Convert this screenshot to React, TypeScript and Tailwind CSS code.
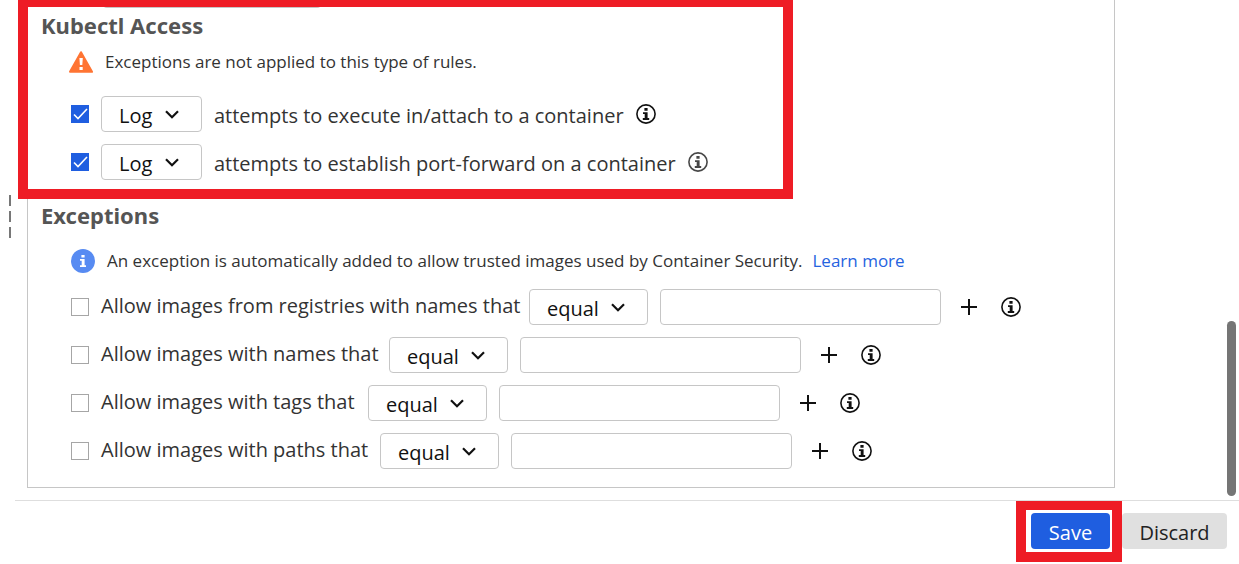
import { useState } from "react"

const kubectlRules = [
  { id: "exec", label: "attempts to execute in/attach to a container", iconColor: "text-[#111]" },
  { id: "port-forward", label: "attempts to establish port-forward on a container", iconColor: "text-[#484848]" },
]

const exceptionRules = [
  { id: "registries", label: "Allow images from registries with names that", labelWidth: "w-[416px]" },
  { id: "names", label: "Allow images with names that", labelWidth: "w-[276px]" },
  { id: "tags", label: "Allow images with tags that", labelWidth: "w-[255px]" },
  { id: "paths", label: "Allow images with paths that", labelWidth: "w-[267px]" },
]

function InfoIcon({ className = "" }: { className?: string }) {
  return (
    <svg viewBox="0 0 20 20" className={`size-5 ${className}`} aria-hidden="true">
      <circle cx="10" cy="10" r="9.1" fill="none" stroke="currentColor" strokeWidth="1.6" />
      <path d="M8.4 4h3.2v2.8H8.4zM7 8.2h4.6v5.9h1.6V16H6.8v-1.9h1.9V10H7z" fill="currentColor" />
    </svg>
  )
}

function PlusIcon() {
  return (
    <svg viewBox="0 0 16 16" className="size-4" aria-hidden="true">
      <path d="M8 0v16M0 8h16" stroke="#111" strokeWidth="2" />
    </svg>
  )
}

function WarningIcon() {
  return (
    <svg viewBox="0 0 24 22" className="h-[22px] w-6" aria-hidden="true">
      <path d="M12 1.2 23 20.8H1z" fill="#ff7433" stroke="#ff7433" strokeWidth="2" strokeLinejoin="round" />
      <path d="M10.4 7h3.4l-.5 7h-2.4zM10.5 16h3.2v3h-3.2z" fill="#fff" />
    </svg>
  )
}

function NoticeIcon() {
  return (
    <svg viewBox="0 0 24 24" className="size-6" aria-hidden="true">
      <circle cx="12" cy="12" r="12" fill="#578bf2" />
      <path d="M10.4 6h3.2v2.4h-3.2zM9 10h4.6v6.3H15V18H9v-1.7h1.7v-4.6H9z" fill="#fff" />
    </svg>
  )
}

function Checkbox({ id, defaultChecked = false }: { id: string; defaultChecked?: boolean }) {
  const [checked, setChecked] = useState(defaultChecked)

  return (
    <span className="grid size-[18px] shrink-0">
      <input
        id={id}
        type="checkbox"
        checked={checked}
        onChange={(e) => setChecked(e.target.checked)}
        className="col-start-1 row-start-1 size-[18px] appearance-none border border-[#a6a6a6] bg-white checked:border-[#1f5ee0] checked:bg-[#1f5ee0]"
      />
      {checked && (
        <svg viewBox="0 0 18 18" className="pointer-events-none col-start-1 row-start-1 size-[18px]" aria-hidden="true">
          <path d="m3 9.5 4 4L16 4" fill="none" stroke="#fff" strokeWidth="1.6" />
        </svg>
      )}
    </span>
  )
}

function Dropdown({ label, options, width }: { label: string; options: string[]; width: string }) {
  return (
    <span className={`grid h-9 shrink-0 items-center ${width}`}>
      <select
        aria-label={label}
        className="col-start-1 row-start-1 h-9 w-full appearance-none rounded border border-[#c6c6c6] bg-white pt-1 pl-[17px] text-xl font-medium text-[#111]"
      >
        {options.map((option) => (
          <option key={option}>{option}</option>
        ))}
      </select>
      <svg
        viewBox="0 0 14 9"
        className="pointer-events-none col-start-1 row-start-1 mr-[23px] h-[9px] w-3.5 justify-self-end"
        aria-hidden="true"
      >
        <path d="m1 1.2 6 6 6-6" fill="none" stroke="#111" strokeWidth="2.2" />
      </svg>
    </span>
  )
}

function SectionTitle({ children }: { children: string }) {
  return <h2 className="font-['Noto_Sans',sans-serif] text-[22px] leading-[34px] font-bold text-[#555]">{children}</h2>
}

export default function App() {
  return (
    <div className="flex bg-white font-['Open_Sans','Noto_Sans',sans-serif] text-[#333]">
      <div className="flex w-[15px] shrink-0 flex-col items-end gap-[5px] pt-[195px] pr-1">
        <span className="h-[11px] w-0.5 bg-[#777]" />
        <span className="h-[11px] w-0.5 bg-[#777]" />
        <span className="h-[11px] w-0.5 bg-[#777]" />
      </div>

      <div className="min-w-0 flex-1">
        <main className="relative border-b border-[#dedede] pr-[124px] pb-3 pl-3">
          <div className="border-x border-b border-[#c6c6c6] pb-[18px] pl-[13px]">
            <section className="pb-[18px]">
              <div className="ml-[62px] h-2 w-[218px] rounded-b border-b border-[#c6c6c6]" />
              <SectionTitle>Kubectl Access</SectionTitle>
              <div className="mt-0.5 mb-4 ml-7 flex h-9 items-center gap-3 text-[17px]">
                <WarningIcon />
                <p>Exceptions are not applied to this type of rules.</p>
              </div>
              <div className="ml-[30px] flex flex-col gap-3">
                {kubectlRules.map((rule) => (
                  <div key={rule.id} className="flex h-9 items-center gap-3">
                    <Checkbox id={rule.id} defaultChecked />
                    <Dropdown label={`Action for ${rule.label}`} options={["Log", "Block"]} width="w-[101px]" />
                    <label htmlFor={rule.id} className="pt-1 text-xl whitespace-nowrap">
                      {rule.label}
                    </label>
                    <button type="button" aria-label="More information">
                      <InfoIcon className={rule.iconColor} />
                    </button>
                  </div>
                ))}
              </div>
            </section>

            <section>
              <SectionTitle>Exceptions</SectionTitle>
              <div className="mt-[11px] mb-2.5 ml-[30px] flex h-9 items-center gap-3 text-[17px]">
                <NoticeIcon />
                <p>
                  An exception is automatically added to allow trusted images used by Container Security.
                  <a href="#learn-more" className="ml-2.5 text-[#2563e0]">
                    Learn more
                  </a>
                </p>
              </div>
              <div className="ml-[30px] flex flex-col gap-3">
                {exceptionRules.map((rule) => (
                  <div key={rule.id} className="flex h-9 items-center gap-3">
                    <Checkbox id={rule.id} />
                    <label htmlFor={rule.id} className={`pb-0.5 text-xl whitespace-nowrap ${rule.labelWidth}`}>
                      {rule.label}
                    </label>
                    <Dropdown label={`${rule.label}: operator`} options={["equal", "contain"]} width="w-[119px]" />
                    <input
                      type="text"
                      aria-label={rule.label}
                      className="h-9 w-[281px] rounded border border-[#c6c6c6] bg-white px-3 text-xl"
                    />
                    <button type="button" aria-label="Add" className="ml-2">
                      <PlusIcon />
                    </button>
                    <button type="button" aria-label="More information" className="ml-3">
                      <InfoIcon className="text-[#111]" />
                    </button>
                  </div>
                ))}
              </div>
            </section>
          </div>

          {/* highlight around the kubectl rules */}
          <div className="pointer-events-none absolute -top-[3px] left-[3px] h-[202px] w-[775px] border-10 border-[#ee1c25]" />
          {/* scrollbar thumb */}
          <div className="absolute right-[3px] bottom-1 h-[175px] w-[9px] rounded-full bg-[#757575]" />
        </main>

        <footer className="flex items-start justify-end pr-3 text-xl">
          <div className="-mt-px border-10 border-[#ee1c25] pt-[3px] pr-0.5 pb-[3px] pl-[5px]">
            <button type="button" className="block h-9 w-[79px] rounded bg-[#1f5ee0] pt-1 text-white">
              Save
            </button>
          </div>
          <button type="button" className="mt-3 h-9 w-[105px] rounded bg-[#e0e0e0] pt-1 text-[#222]">
            Discard
          </button>
        </footer>
      </div>
    </div>
  )
}
